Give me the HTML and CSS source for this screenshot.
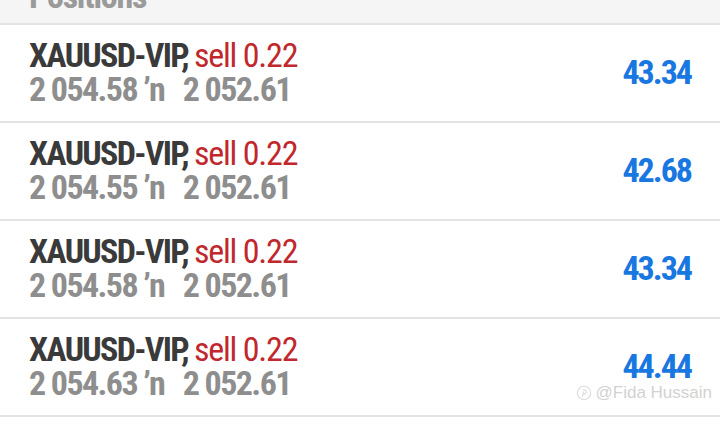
FILE: index.html
```html
<!DOCTYPE html>
<html lang="en">
<head>
    <meta charset="UTF-8">
    <title>Positions</title>
    <link rel="stylesheet" href="styles.css">
</head>
<body>
    <div class="section-head"><span>Positions</span></div>

    <div class="positions">
        <div class="position">
            <div class="info">
                <div class="title">XAUUSD-VIP, <span class="sell">sell 0.22</span></div>
                <div class="prices">2 054.58 ʼn   2 052.61</div>
            </div>
            <div class="profit">43.34</div>
        </div>
        <div class="position">
            <div class="info">
                <div class="title">XAUUSD-VIP, <span class="sell">sell 0.22</span></div>
                <div class="prices">2 054.55 ʼn   2 052.61</div>
            </div>
            <div class="profit">42.68</div>
        </div>
        <div class="position">
            <div class="info">
                <div class="title">XAUUSD-VIP, <span class="sell">sell 0.22</span></div>
                <div class="prices">2 054.58 ʼn   2 052.61</div>
            </div>
            <div class="profit">43.34</div>
        </div>
        <div class="position">
            <div class="info">
                <div class="title">XAUUSD-VIP, <span class="sell">sell 0.22</span></div>
                <div class="prices">2 054.63 ʼn   2 052.61</div>
            </div>
            <div class="profit">44.44</div>
            <div class="watermark">
                <svg width="16" height="16" viewBox="0 0 18 18"><circle cx="9" cy="9" r="7.5" fill="none" stroke="#dadada" stroke-width="1.2"/><path d="M8 5.5c2.5-.6 4 1 3.5 3-.4 1.6-2 2.2-3 1.4M8.6 7.5 7 14" fill="none" stroke="#dadada" stroke-width="1.2"/></svg>
                <span>@Fida Hussain</span>
            </div>
        </div>
    </div>
</body>
</html>
```

FILE: styles.css
```css
body { margin: 0; background: #fff; font-family: Roboto, "Liberation Sans", sans-serif; font-stretch: 75%; overflow: hidden; }
.section-head { height: 25px; background: #f5f5f5; border-bottom: 2px solid #e3e3e3; display: flex; align-items: flex-end; overflow: hidden; padding: 0 29px 10px; box-sizing: border-box; }
.section-head span { font-size: 34px; line-height: 1; font-weight: 700; letter-spacing: -1.2px; color: #9a9a9a; }
.position { position: relative; display: flex; align-items: center; justify-content: space-between; padding: 0 29px 2px; height: 98px; box-sizing: border-box; border-bottom: 2px solid #e3e3e3; }
.info { font-size: 34px; line-height: 34px; }
.title { font-weight: 700; color: #3a3a3a; letter-spacing: -1.7px; }
.sell { font-weight: 400; color: #c0282d; letter-spacing: -1.2px; }
.prices { font-weight: 700; color: #8e8e8e; white-space: pre; letter-spacing: -1.6px; }
.profit { font-size: 34px; line-height: 34px; font-weight: 700; color: #1877e0; letter-spacing: -2px; }
.watermark { position: absolute; right: 8px; bottom: 12px; display: flex; align-items: center; gap: 4px; font-family: "Liberation Sans", sans-serif; font-stretch: normal; font-size: 17px; color: #d2d2d2; }
```
